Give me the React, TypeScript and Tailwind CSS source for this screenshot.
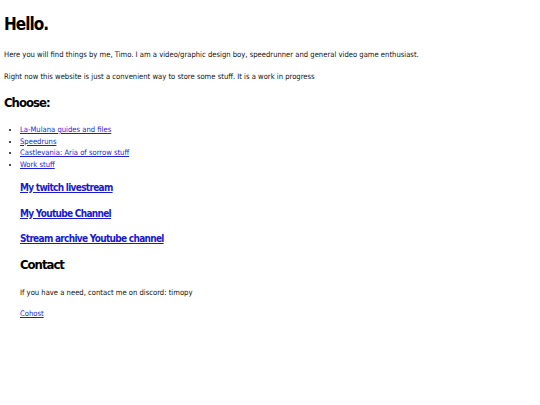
import React from "react";

const font = { fontFamily: '"DejaVu Sans Condensed", "DejaVu Sans", sans-serif' };

const links = [
  "La-Mulana guides and files",
  "Speedruns",
  "Castlevania: Aria of sorrow stuff",
  "Work stuff",
];

const App = () => {
  return (
    <div className="min-h-[405px] w-[540px] bg-white px-[4px] text-[#111]" style={font}>
      <h1 className="pt-[12px] text-[17px] font-bold leading-[24px] tracking-[-1px] text-black">Hello.</h1>
      <p className="mt-[13px] text-[7.6px] leading-[12px]">
        Here you will find things by me, Timo. I am a video/graphic design boy, speedrunner and general video game enthusiast.
      </p>
      <p className="mt-[10px] text-[7.6px] leading-[12px]">
        Right now this website is just a convenient way to store some stuff. It is a work in progress
      </p>
      <h2 className="mt-[11px] text-[13px] font-bold leading-[18px] tracking-[-1px] text-black">Choose:</h2>
      <ul className="mt-[12px] list-disc pl-[16px] text-[7.6px] leading-[11.7px]">
        {links.map((l) => (
          <li key={l}>
            <a href="#" className="text-[#1f1fd6] underline">
              {l}
            </a>
          </li>
        ))}
      </ul>
      <div className="pl-[16px]">
        <h3 className="mt-[10px] text-[10px] font-bold leading-[14px] tracking-[-0.7px]">
          <a href="#" className="text-[#1a1acc] underline">My twitch livestream</a>
        </h3>
        <h3 className="mt-[12px] text-[10px] font-bold leading-[14px] tracking-[-0.7px]">
          <a href="#" className="text-[#1a1acc] underline">My Youtube Channel</a>
        </h3>
        <h3 className="mt-[11px] text-[10px] font-bold leading-[14px] tracking-[-0.7px]">
          <a href="#" className="text-[#1a1acc] underline">Stream archive Youtube channel</a>
        </h3>
        <h2 className="mt-[10px] text-[13px] font-bold leading-[18px] tracking-[-1px] text-black">Contact</h2>
        <p className="mt-[13px] text-[7.6px] leading-[12px]">
          If you have a need, contact me on discord: timopy
        </p>
        <p className="mt-[9px] text-[7.6px] leading-[12px]">
          <a href="#" className="text-[#1f1fd6] underline">Cohost</a>
        </p>
      </div>
    </div>
  );
};

export default App;
